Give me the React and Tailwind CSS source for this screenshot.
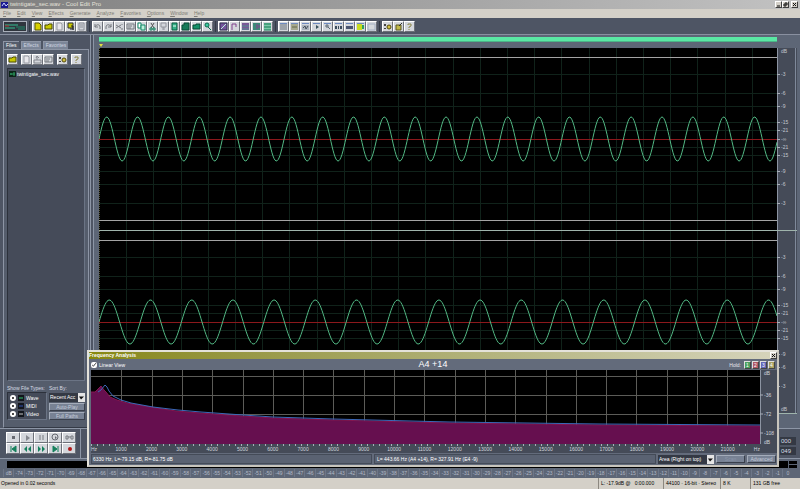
import React, { useState } from "react";

const MENU = ["File", "Edit", "View", "Effects", "Generate", "Analyze", "Favorites", "Options", "Window", "Help"];

// All glyphs are drawn on a 9x9 grid.
const GLYPHS = {
  page: <path d="M2 1h4l2 2v5H2z" fill="#d8d000" stroke="#5a5800" />,
  folder: <path d="M1 3h3l1-1h3v5H1z" fill="#c8c800" stroke="#4c4c00" />,
  save: <path d="M2 1h4l1 1v6H2z" fill="#e8e8ec" stroke="#9a9ca4" />,
  saveAs: (
    <>
      <path d="M2 1h5v5H2z" fill="#c8c800" stroke="#333" />
      <path d="M5 4h2v4M4 7h4" stroke="#222" fill="none" />
    </>
  ),
  doc: <path d="M2 1h5v7H2zM3 3h3M3 5h3" fill="none" stroke="#8a8d96" />,
  undo: <path d="M2 2v3h3M2 5c1-3 5-3 5 0v2" fill="none" stroke="#777a80" />,
  redo: <path d="M7 2v3H4M7 5c-1-3-5-3-5 0v2" fill="none" stroke="#777a80" />,
  trim: <path d="M1 3l5 3M1 6l5-3M7 2v1M7 6v2" fill="none" stroke="#777a80" />,
  card: <path d="M1 2h7v5H1zM2 4h4M2 6h3" fill="none" stroke="#777a80" />,
  copy: (
    <>
      <path d="M1 1h3v5H1z" fill="#fff" stroke="#158a68" />
      <path d="M4 3h4v5H4z" fill="#bff0dc" stroke="#158a68" />
    </>
  ),
  cut: (
    <>
      <path d="M3 1l3 5M6 1L3 6" stroke="#555" fill="none" />
      <path d="M2 6h2v2H2zM5 6h2v2H5z" stroke="#15805c" fill="none" />
    </>
  ),
  paste: <path d="M2 1h5v4H2zM4 5v3M5 5v3" fill="none" stroke="#94969e" />,
  mix: (
    <>
      <path d="M2 1h5v7H2z" fill="#35b088" stroke="#0b5c40" />
      <path d="M3 4h3" stroke="#e6fff4" />
    </>
  ),
  pasteNew: <path d="M1 3h2V1h5v7H1z" fill="#157a58" stroke="#084a34" />,
  folderGreen: <path d="M1 3h3V2h4v5H1z" fill="#159068" stroke="#084a34" />,
  convert: (
    <>
      <circle cx="4" cy="3" r="2" fill="#3cc8a0" stroke="#0b6a4c" />
      <path d="M5 5l3 3" stroke="#0b6a4c" />
    </>
  ),
  envelope: (
    <>
      <path d="M1 1h7v7H1z" fill="#74549c" stroke="#303050" />
      <path d="M2 7l5-5" stroke="#b8f0d8" />
    </>
  ),
  step: <path d="M2 8V2h4v3" fill="none" stroke="#80408c" />,
  bars: (
    <>
      <path d="M1 1h7v7H1z" fill="#7a5a98" />
      <path d="M1 4h7M1 7h7" stroke="#4f8f90" />
    </>
  ),
  barsMix: (
    <>
      <path d="M1 1h7v7H1z" fill="#3c8878" />
      <path d="M5 2v5M7 3v3" stroke="#8a3c90" />
    </>
  ),
  barsGreen: (
    <>
      <path d="M1 1h7v7H1z" fill="#7cc8a8" />
      <path d="M1 2h7M1 5h7M1 8h7" stroke="#157a54" />
    </>
  ),
  win: (
    <>
      <path d="M1 2h7v6H1z" fill="#9da3aa" />
      <path d="M1 1h7v1H1z" fill="#6d8ac0" />
    </>
  ),
  winOlive: (
    <>
      <path d="M1 2h7v6H1z" fill="#a5a78e" />
      <path d="M1 1h7v1H1z" fill="#6d8ac0" />
      <path d="M2 5h5" stroke="#656848" />
    </>
  ),
  winWave: (
    <>
      <path d="M1 1h7v1H1z" fill="#6d8ac0" />
      <path d="M1 3h7v5H1z" fill="#aab2bc" />
      <path d="M2 6l2-2 1 3 2-3" fill="none" stroke="#48525e" />
    </>
  ),
  winPlay: (
    <>
      <path d="M1 1h7v1H1z" fill="#6d8ac0" />
      <path d="M4 3l3 2-3 2z" fill="#38505c" />
    </>
  ),
  winZoom: (
    <>
      <path d="M1 1h7v1H1z" fill="#6d8ac0" />
      <path d="M3 3h2v2H3zM5 5l2 2" fill="none" stroke="#5c6874" />
    </>
  ),
  winTime: (
    <>
      <path d="M1 1h7v1H1z" fill="#6d8ac0" />
      <path d="M1 4h2v3H1zM4 4h1v3H4zM6 4h2v3H6z" fill="#3c4c5c" />
    </>
  ),
  winInfo: (
    <>
      <path d="M1 1h7v1H1z" fill="#6d8ac0" />
      <path d="M1 4h7v3H1z" fill="#4a5470" />
    </>
  ),
  winCue: (
    <>
      <path d="M1 1h7v1H1z" fill="#6d8ac0" />
      <path d="M1 2h5v6H1z" fill="#c8dc20" />
      <path d="M6 3h2v4H6z" fill="#30a060" />
    </>
  ),
  winBlank: <path d="M1 2h7v6H1z" fill="#d6dade" stroke="#a4b0c4" />,
  options: (
    <>
      <path d="M1 2h2v2H1zM1 6h2v1H1z" fill="#444" />
      <circle cx="6" cy="5" r="2" fill="#d0c040" stroke="#554c10" />
    </>
  ),
  script: (
    <>
      <path d="M2 3h5v5H2z" fill="#c0b848" stroke="#5c5820" />
      <path d="M5 4l3-3" stroke="#333" />
    </>
  ),
  help: <path d="M3 3V2h3v2L4 5v1M4 7v1" fill="none" stroke="#8c8648" />,
  insert: <path d="M1 5h7v3H1zM3 3l1-2 2 2M4 1v4" fill="none" stroke="#85888f" />,
  stop: <path d="M3 3h3v3H3z" fill="#666970" />,
  play: <path d="M3 2l4 3-4 3z" fill="#85888f" />,
  pause: <path d="M3 2v5M6 2v5" stroke="#777a80" />,
  playLoop: (
    <>
      <circle cx="4" cy="4" r="3" fill="none" stroke="#666970" />
      <path d="M4 3l2 2-2 1z" fill="#666970" />
    </>
  ),
  loop: <path d="M1 3h2v3H1zM6 3h2v3H6zM3 4h3" fill="none" stroke="#777a80" />,
  start: <path d="M2 2v6M7 2L3 5l4 3z" fill="#15805c" stroke="#15805c" />,
  rewind: <path d="M4 2L1 5l3 3zM8 2L5 5l3 3z" fill="#15805c" />,
  forward: <path d="M1 2l3 3-3 3zM5 2l3 3-3 3z" fill="#15805c" />,
  end: <path d="M7 2v6M2 2l4 3-4 3z" fill="#15805c" stroke="#15805c" />,
  record: <circle cx="5" cy="5" r="2" fill="#b01818" />,
};

const TOOL_GROUPS = [
  ["page", "folder", "save", "saveAs", "doc"],
  ["undo", "redo", "trim", "card", "copy", "cut", "paste", "mix", "pasteNew", "folderGreen", "convert"],
  ["envelope", "step", "bars", "barsMix", "barsGreen"],
  ["win", "winOlive", "winWave", "winPlay", "winZoom", "winTime", "winInfo", "winCue", "winBlank"],
  ["options", "script", "help"],
];

const Glyph = ({ name }) => (
  <svg viewBox="0 0 9 9" className="w-[9px] h-[9px]" aria-hidden="true">
    {GLYPHS[name]}
  </svg>
);

const ToolButton = ({ name }) => (
  <button
    aria-label={name}
    className="flex items-center justify-center w-[11px] h-[11px] bg-[#d4d7dc] border border-t-white border-l-white border-r-[#6c7078] border-b-[#6c7078]"
  >
    <Glyph name={name} />
  </button>
);

const CaptionButton = ({ label, children }) => (
  <button
    aria-label={label}
    className="w-[7px] h-[7px] bg-[#d4d0c8] border border-t-white border-l-white border-r-[#404040] border-b-[#404040]"
  >
    <svg viewBox="0 0 5 5" className="block w-[5px] h-[5px]" fill="none" stroke="#111">
      {children}
    </svg>
  </button>
);

const TitleBar = () => (
  <header className="flex items-center h-[9px] pl-[1px] pr-[2px] bg-linear-to-r from-[#808080] to-[#c2c2c2]">
    <svg viewBox="0 0 8 8" className="w-[8px] h-[8px] mr-[1px]">
      <path d="M0 1h7v6H0z" fill="#1a1a90" />
      <path d="M1 5l2-3 2 3 2-2" fill="none" stroke="#c8d0ff" />
    </svg>
    <h1 className="grow text-[6px] leading-[9px] text-[#e4e1da]">
      twintigate_sec.wav - Cool Edit Pro
    </h1>
    <CaptionButton label="Minimize">
      <path d="M1 4h3" />
    </CaptionButton>
    <CaptionButton label="Restore">
      <path d="M2 1h2v2H2zM1 2v2h2" />
    </CaptionButton>
    <span className="w-[2px]" />
    <CaptionButton label="Close">
      <path d="M1 1l3 3M4 1L1 4" />
    </CaptionButton>
  </header>
);

const MenuBar = () => (
  <nav className="flex gap-[6px] h-[9px] pl-[3px] bg-[#d4d0c8]">
    {MENU.map((m) => (
      <button key={m} className="text-[5px] leading-[9px] text-[#807d76]">
        <span className="underline">{m[0]}</span>
        {m.slice(1)}
      </button>
    ))}
  </nav>
);

const Toolbar = () => (
  <div className="flex items-center h-[17px] pl-[3px] bg-[#4e5564] border-b border-[#8990a0]">
    <button
      aria-label="Switch view"
      className="w-[24px] h-[11px] mr-[2px] bg-[#30353e] border border-[#a9afba]"
    >
      <svg viewBox="0 0 22 9" className="block w-[22px] h-[9px]">
        <path d="M1 3h13M1 6h10" stroke="#35c090" />
        <path d="M12 5h9M14 7h7" stroke="#208868" />
        <path d="M1 4h4" stroke="#b83030" />
      </svg>
    </button>
    {TOOL_GROUPS.map((group) => (
      <div key={group[0]} className="flex pl-[2px] pr-[2px] border-l border-[#343a46]">
        {group.map((name) => (
          <ToolButton key={name} name={name} />
        ))}
      </div>
    ))}
  </div>
);

const Tab = ({ active, children, onClick }) => (
  <button
    role="tab"
    aria-selected={active}
    onClick={onClick}
    className={`px-[2px] h-[8px] text-[5px] leading-[7px] border-t border-l border-[#8d95a5] ${
      active ? "bg-[#555d6c] text-white" : "bg-[#7c8698] text-[#d0d7e2]"
    }`}
  >
    {children}
  </button>
);

const FileType = ({ label, color }) => (
  <label className="flex items-center gap-[2px] h-[8px] text-[5px] leading-[8px] text-white">
    <input
      type="checkbox"
      defaultChecked
      className="appearance-none w-[6px] h-[6px] rounded-full bg-[#111] border-2 border-white"
    />
    <svg viewBox="0 0 6 6" className="w-[6px] h-[6px]">
      <path d="M0 0h6v6H0z" fill="#12161c" />
      <path d="M1 3h4" stroke={color} />
    </svg>
    {label}
  </label>
);

const SmallButton = ({ children }) => (
  <button className="h-[8px] text-[5px] leading-[6px] text-[#c4ccda] bg-[#788294] border border-t-[#a4acba] border-l-[#a4acba] border-r-[#3a404c] border-b-[#3a404c]">
    {children}
  </button>
);

const Organizer = () => {
  const [tab, setTab] = useState("Files");

  return (
    <aside className="flex flex-col w-[91px] shrink-0 pt-[6px] pl-[3px] pr-[1px] bg-[#4e5564] border-r border-[#8d96a6]">
      <div role="tablist" className="flex gap-[2px]">
        {["Files", "Effects", "Favorites"].map((t) => (
          <Tab key={t} active={t === tab} onClick={() => setTab(t)}>
            {t}
          </Tab>
        ))}
      </div>
      <div className="flex flex-col grow p-[3px] bg-[#555d6c] border border-t-[#8d95a5] border-l-[#8d95a5] border-r-[#8d95a5] border-b-[#343a46]">
        <div className="flex pt-[1px] pb-[3px]">
          <ToolButton name="folder" />
          <div className="flex mx-[3px]">
            <ToolButton name="save" />
            <ToolButton name="insert" />
            <ToolButton name="card" />
          </div>
          <ToolButton name="options" />
          <span className="w-[3px]" />
          <ToolButton name="help" />
        </div>
        <ul className="grow pt-[1px] bg-[#454b59] border border-t-[#2c313b] border-l-[#2c313b] border-r-[#6b7485] border-b-[#6b7485]">
          <li className="flex items-center gap-[1px] pl-[1px] text-[5px] leading-[8px] text-white">
            <svg viewBox="0 0 7 6" className="w-[7px] h-[6px]">
              <path d="M0 0h7v6H0z" fill="#0c2418" />
              <path d="M1 3h5M2 2v2M5 1v4" stroke="#2c9c60" />
            </svg>
            twintigate_sec.wav
          </li>
        </ul>
        <div className="flex gap-[2px] pt-[3px] pb-[4px] text-[5px] leading-[8px] text-[#d8dce4]">
          <div className="w-[40px] shrink-0">
            <div className="whitespace-nowrap">Show File Types:</div>
            <div className="px-[2px] py-[1px] h-[28px] bg-[#454b59] border border-t-[#2c313b] border-l-[#2c313b] border-r-[#6b7485] border-b-[#6b7485]">
              <FileType label="Wave" color="#30c070" />
              <FileType label="MIDI" color="#3050b0" />
              <FileType label="Video" color="#c8c8c8" />
            </div>
          </div>
          <div className="flex flex-col gap-[1px] grow min-w-0">
            <label htmlFor="sort-by">Sort By:</label>
            <div className="flex h-[9px]">
              <select
                id="sort-by"
                className="appearance-none grow min-w-0 pl-[1px] text-[5px] leading-[9px] text-white bg-[#343944]"
              >
                <option>Recent Acc</option>
              </select>
              <span className="w-[7px] h-[9px] bg-[#e4e4e4]">
                <svg viewBox="0 0 7 8" className="block w-[7px] h-[9px]">
                  <path d="M1 3h5L3 6z" fill="#111" />
                </svg>
              </span>
            </div>
            <SmallButton>Auto-Play</SmallButton>
            <SmallButton>Full Paths</SmallButton>
          </div>
        </div>
      </div>
    </aside>
  );
};

const CHANNEL_H = 183;
const DB_MARKS = [
  [26, "-3"], [45, "-6"], [58, "-9"], [74, "-15"], [82, "-21"], [91, "-∞"],
  [99, "-21"], [107, "-15"], [123, "-9"], [136, "-6"], [155, "-3"],
];

const sinePath = (period, width, mid, amp) => {
  let d = `M0 ${mid}`;
  for (let x = 1; x <= width; x++) {
    d += `L${x} ${(mid - amp * Math.sin((2 * Math.PI * x) / period)).toFixed(2)}`;
  }
  return d;
};

const Channel = ({ name, period, unitY }) => (
  <div className="flex h-[183px]">
    <svg
      viewBox={`0 0 678 ${CHANNEL_H}`}
      preserveAspectRatio="none"
      className="block grow min-w-0 h-full bg-black"
      role="img"
      aria-label={name}
    >
      <g fill="#10221a">
        {Array.from({ length: 24 }, (_, i) => (
          <rect key={i} x={Math.round((i + 1) * 27.2)} width="1" height={CHANNEL_H} />
        ))}
        {DB_MARKS.map(([y]) => (
          <rect key={y} y={y} width="678" height="1" />
        ))}
      </g>
      <rect y="91" width="678" height="1" fill="#8c181c" />
      <rect y="9" width="678" height="1" fill="#a4a4a4" />
      <rect y="172" width="678" height="1" fill="#a4a4a4" />
      <path d={sinePath(period, 678, 91, 22)} fill="none" stroke="#52b884" />
      <rect y="182" width="678" height="1" fill="#9fb4ac" />
      <path d="M0 0V183" stroke="#a8a878" strokeDasharray="1 1" />
    </svg>
    <svg viewBox={`0 0 20 ${CHANNEL_H}`} className="block w-[20px] h-[183px] bg-[#454b58]">
      <rect width="1" height={CHANNEL_H} fill="#8c94a2" />
      <rect x="18" width="1" height={CHANNEL_H} fill="#7f899a" />
      <rect y="182" width="20" height="1" fill="#9fb4ac" />
      <text x="4" y={unitY} fontSize="5" fill="#c4c8d0">dB</text>
      {DB_MARKS.map(([y, label]) => (
        <g key={y}>
          <rect y={y} width="3" height="1" fill="#a8aeb8" />
          <text x="4" y={y + 2} fontSize="5" fill="#c4c8d0">{label}</text>
        </g>
      ))}
    </svg>
  </div>
);

const WaveView = () => (
  <main className="flex grow min-w-0 pl-[2px] bg-[#4e5564]">
    <div className="grow min-w-0 pl-[5px] pr-[3px] pt-[2px] bg-[#5d6676] border-l border-[#8d96a6]">
      <div className="h-[5px] mr-[20px] bg-[#5ae8a4] border-b border-[#4cb488]" />
      <div className="h-[6px]">
        <svg viewBox="0 0 6 6" className="block w-[6px] h-[6px]">
          <path d="M0 2h4L2 5z" fill="#e0e040" />
        </svg>
      </div>
      <Channel name="Left channel" period={30.85} unitY={5} />
      <Channel name="Right channel" period={41.2} unitY={180} />
    </div>
  </main>
);

const Transport = () => (
  <div className="flex h-[30px] bg-[#4e5564] border-t border-[#8d96a6]">
    <div className="grid grid-cols-5 content-start w-[81px] pl-[6px] pr-[4px] pt-[3px] border-r border-[#8d96a6]">
      {["stop", "play", "pause", "playLoop", "loop", "start", "rewind", "forward", "end", "record"].map((name) => (
        <button
          key={name}
          aria-label={name}
          className="flex items-center justify-center h-[11px] bg-[#d4d7dc] border border-t-white border-l-white border-r-[#6c7078] border-b-[#6c7078]"
        >
          <Glyph name={name} />
        </button>
      ))}
    </div>
    <div className="flex flex-col gap-[2px] grow items-end pt-[8px] pr-[4px] text-[6px] leading-[8px] text-[#d8dce4]">
      <span className="w-[16px] pl-[1px] bg-[#343944]">000</span>
      <span className="w-[16px] pl-[1px] bg-[#343944]">049</span>
    </div>
  </div>
);

const LevelMeter = () => (
  <div className="h-[20px] pt-[2px] bg-[#5d6676] border-t border-[#8d96a6]">
    <div className="flex h-[7px] ml-[7px] mr-[3px] gap-[1px]">
      <div className="grow bg-black" />
      <div className="flex flex-col gap-[1px] w-[8px]">
        <div className="grow bg-black" />
        <div className="grow bg-black" />
      </div>
    </div>
    <div className="flex ml-[3px] mr-[7px] pt-[1px] text-[5px] leading-[8px] text-[#b2b9c6]">
      {Array.from({ length: 76 }, (_, i) => (
        <span key={i} className="flex-1 min-w-0 text-center whitespace-nowrap border-l border-[#6d7687]">
          {i === 0 ? "dB" : i === 75 ? "0" : i - 75}
        </span>
      ))}
    </div>
  </div>
);

const StatusBar = () => (
  <footer className="flex h-[11px] bg-[#d4d0c8] text-[5px] leading-[11px] text-black whitespace-nowrap">
    <span className="grow pl-[1px]">Opened in 0.02 seconds</span>
    <span className="w-[65px] pl-[2px] border-l border-[#8c8880]">L: -17.9dB @ &nbsp; 0:00.000</span>
    <span className="w-[57px] pl-[2px] border-l border-[#8c8880]">44100 · 16-bit · Stereo</span>
    <span className="w-[30px] pl-[2px] border-l border-[#8c8880]">8 K</span>
    <span className="w-[50px] pl-[2px] border-l border-[#8c8880]">131 GB free</span>
  </footer>
);

const SPECTRUM_RIGHT =
  "M0 22L4 22L7 19L10 16L13 20L15 22L19 27L26 30L36 33L59 37L85 41L109 43L151 46L182 48L242 50L359 53L509 55L669 56";
const SPECTRUM_LEFT =
  "M7 22L10 20L14 15L16 17L18 21L22 26L30 30L40 33L62 37L87 40L110 42L152 45L182 47L242 49L359 52L509 54L669 55";

const FREQS = Array.from({ length: 21 }, (_, i) => (i + 1) * 1000);

const HOLDS = [
  ["1", "bg-[#4ca060]"],
  ["2", "bg-[#b05868]"],
  ["3", "bg-[#6468b8]"],
  ["4", "bg-[#a8a060]"],
];

const FrequencyAnalysis = () => (
  <section
    aria-label="Frequency Analysis"
    className="absolute left-[87px] right-[21px] bottom-[22px] bg-[#636b7b] border-2 border-t-[#e4e2da] border-l-[#e4e2da] border-r-[#c8c5bd] border-b-[#c8c5bd]"
  >
    <div className="flex items-center justify-between h-[7px] bg-linear-to-r from-[#87870c] to-[#d6d4bc]">
      <h2 className="text-[5px] leading-[7px] font-bold text-white">Frequency Analysis</h2>
      <CaptionButton label="Close">
        <path d="M1 1l3 3M4 1L1 4" />
      </CaptionButton>
    </div>
    <div className="grid grid-cols-3 items-center h-[11px] px-[2px]">
      <label className="flex items-center gap-[2px] text-[5px] leading-[10px] text-white">
        <input type="checkbox" defaultChecked className="w-[6px] h-[6px] m-0 accent-white" />
        Linear View
      </label>
      <div className="text-center text-[9px] leading-[11px] text-white">A4 +14</div>
      <div className="flex items-center justify-end gap-[1px] text-[5px] leading-[8px] text-[#e4e8ee]">
        <span className="mr-[2px]">Hold:</span>
        {HOLDS.map(([n, color]) => (
          <button key={n} className={`w-[7px] h-[8px] text-[5px] leading-[6px] text-white border border-t-[#e0e0e0] border-l-[#e0e0e0] border-r-[#444] border-b-[#444] ${color}`}>
            {n}
          </button>
        ))}
      </div>
    </div>
    <div className="flex pl-[2px]">
      <div className="grow min-w-0">
        <svg
          viewBox="0 0 669 74"
          preserveAspectRatio="none"
          className="block w-full h-[74px] bg-black"
          role="img"
          aria-label="Spectrum"
        >
          <g stroke="#5c5c58" shapeRendering="crispEdges">
            {FREQS.map((f) => (
              <path key={f} d={`M${Math.round(f * 0.0303)} 0V74`} />
            ))}
            <path d="M0 6H669M0 25H669M0 44H669" />
          </g>
          <path d={`${SPECTRUM_RIGHT}V74H0Z`} fill="#660f4f" />
          <path d={SPECTRUM_RIGHT} fill="none" stroke="#841650" />
          <path d={SPECTRUM_LEFT} fill="none" stroke="#3c68b8" />
        </svg>
        <div className="h-[9px] bg-[#454b58] text-[5px] leading-[7px] text-[#d0d4dc]">
          <svg viewBox="0 0 669 2" preserveAspectRatio="none" className="block w-full h-[2px]" fill="#a8aeb8">
            {Array.from({ length: 110 }, (_, i) => (
              <rect key={i} x={i * 6} width="1" height="2" />
            ))}
          </svg>
          <div className="flex">
            <span className="w-[15px] shrink-0">Hz</span>
            {FREQS.map((f) => (
              <span key={f} className="flex-1 min-w-0 text-center">{f}</span>
            ))}
            <span className="w-[17px] shrink-0 text-right">Hz</span>
          </div>
        </div>
      </div>
      <svg viewBox="0 0 17 83" className="block w-[17px] h-[83px] bg-[#454b58]">
        <rect width="1" height="74" fill="#8c94a2" />
        <path d="M0 25h3M0 44h3M0 63h3" stroke="#a8aeb8" />
        <g fontSize="5" fill="#d0d4dc">
          <text x="4" y="5">dB</text>
          <text x="4" y="27">-36</text>
          <text x="4" y="46">-72</text>
          <text x="4" y="65">-108</text>
          <text x="4" y="74">dB</text>
        </g>
      </svg>
    </div>
    <div className="flex items-center gap-[2px] h-[12px] pl-[2px] pr-[1px] text-[5px] leading-[8px] text-white whitespace-nowrap">
      <span className="flex-1 pl-[1px] bg-[#5a6272] border border-[#444b58]">
        6330 Hz, L=-79.15 dB, R=-81.75 dB
      </span>
      <span className="flex-1 pl-[2px] bg-[#5a6272] border border-[#444b58]">
        L= 443.66 Hz (A4 +14), R= 327.91 Hz (E4 -9)
      </span>
      <div className="flex w-[56px] h-[9px]">
        <select
          aria-label="Display style"
          className="appearance-none grow min-w-0 pl-[1px] text-[5px] leading-[9px] bg-[#343944]"
        >
          <option>Area (Right on top)</option>
        </select>
        <span className="w-[7px] h-[9px] bg-[#e4e4e4]">
          <svg viewBox="0 0 7 8" className="block w-[7px] h-[9px]">
            <path d="M1 3h5L3 6z" fill="#111" />
          </svg>
        </span>
      </div>
      <button className="w-[29px] h-[8px] text-[5px] leading-[6px] text-[#8b95a8] bg-[#788294] border border-t-[#a4acba] border-l-[#a4acba] border-r-[#3a404c] border-b-[#3a404c]">
        Scan
      </button>
      <button className="w-[29px] h-[8px] text-[5px] leading-[6px] text-[#c4ccda] bg-[#788294] border border-t-[#a4acba] border-l-[#a4acba] border-r-[#3a404c] border-b-[#3a404c]">
        Advanced
      </button>
    </div>
  </section>
);

export default () => (
  <div className="relative flex flex-col min-h-screen font-['Liberation_Sans',sans-serif] bg-[#4e5564] overflow-hidden">
    <TitleBar />
    <MenuBar />
    <Toolbar />
    <div className="flex grow">
      <Organizer />
      <WaveView />
    </div>
    <Transport />
    <LevelMeter />
    <StatusBar />
    <FrequencyAnalysis />
  </div>
);
